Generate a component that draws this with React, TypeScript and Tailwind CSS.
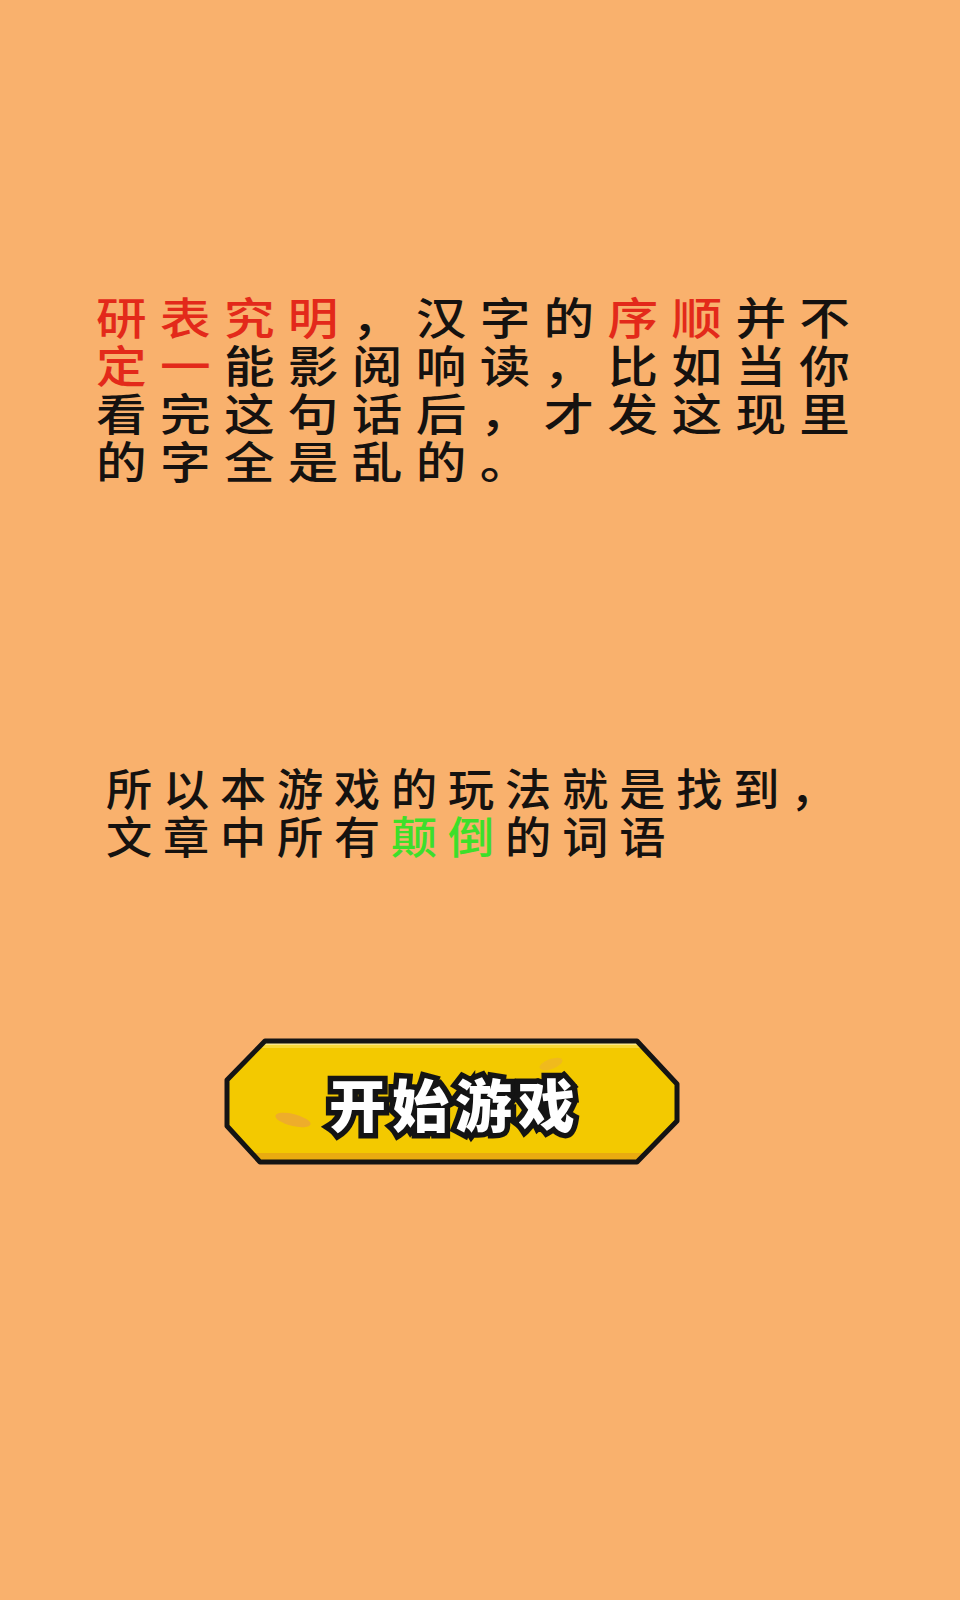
import React from "react";

function StartButton() {
  return (
    <div className="relative ml-[224px] w-[456px] h-[127px] flex items-center justify-center">
      <svg className="absolute inset-0" width="456" height="127" viewBox="0 0 456 127">
        <defs>
          <clipPath id="btnclip">
            <path d="M41 3 L413 3 L453 46 L453 83 L413 124 L36 124 L3 88 L3 42 Z" />
          </clipPath>
        </defs>
        <path d="M41 3 L413 3 L453 46 L453 83 L413 124 L36 124 L3 88 L3 42 Z" fill="#f3c900" />
        <g clipPath="url(#btnclip)">
          <rect x="0" y="3" width="456" height="4" fill="#fbe88a" />
          <rect x="0" y="7" width="456" height="3" fill="#f8d938" />
          <rect x="0" y="115" width="456" height="10" fill="#e9ab10" />
          <ellipse cx="69" cy="82" rx="18" ry="6" transform="rotate(14 69 82)" fill="#eca33a" opacity="0.75" />
          <ellipse cx="327" cy="26" rx="12" ry="5" transform="rotate(-20 327 26)" fill="#eeb030" opacity="0.6" />
        </g>
        <path
          d="M41 3 L413 3 L453 46 L453 83 L413 124 L36 124 L3 88 L3 42 Z"
          fill="none"
          stroke="#141414"
          strokeWidth="5"
          strokeLinejoin="round"
        />
      </svg>
      <span className="relative pl-[6px] font-['Noto_Sans_CJK_SC',sans-serif] font-black text-[57px] leading-[62px] tracking-[6px] text-white [-webkit-text-stroke:11px_#141414] [paint-order:stroke_fill]">
        开始游戏
      </span>
    </div>
  );
}

export default function App() {
  const red = "text-[#e3291a]";
  return (
    <div className="w-[960px] h-[1600px] bg-[#f9b16d] overflow-hidden font-['Noto_Sans_CJK_SC',sans-serif] font-medium text-[#151210]">
      <div className="pt-[292px] pl-[96px]">
        <div className="origin-left scale-x-[1.15] text-[44px] leading-[48px] tracking-[11.6px] whitespace-nowrap">
          <div>
            <span className={red}>研表究明</span>，汉字的<span className={red}>序顺</span>并不
          </div>
          <div>
            <span className={red}>定一</span>能影阅响读，比如当你
          </div>
          <div>看完这句话后，才发这现里</div>
          <div>的字全是乱的。</div>
        </div>
      </div>
      <div className="pt-[279px] pl-[106px]">
        <div className="origin-left scale-x-[1.05] text-[44px] leading-[48px] tracking-[10.3px] whitespace-nowrap">
          <div>所以本游戏的玩法就是找到，</div>
          <div>
            文章中所有<span className="text-[#3ddf2a]">颠倒</span>的词语
          </div>
        </div>
      </div>
      <div className="pt-[179px]">
        <StartButton />
      </div>
    </div>
  );
}
